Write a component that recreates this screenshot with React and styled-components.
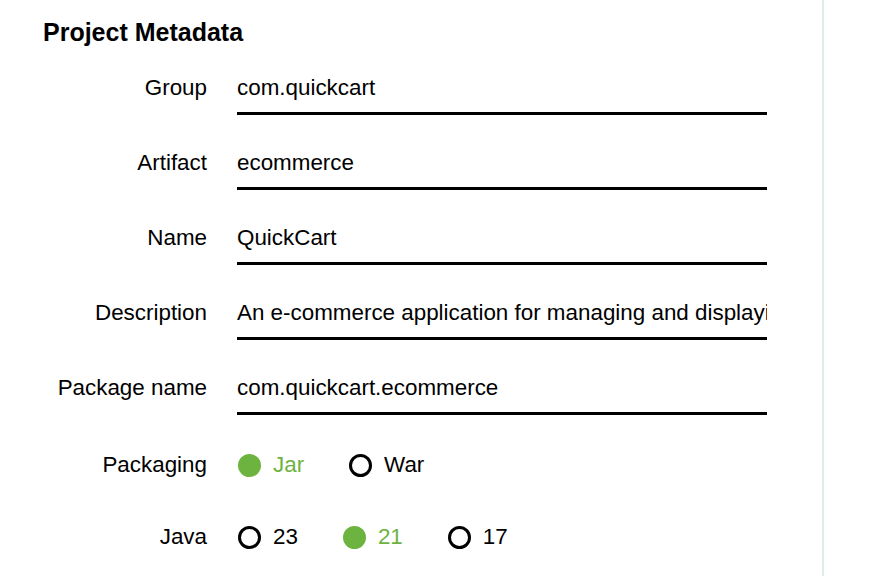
import React, { useState } from 'react'
import styled, { createGlobalStyle } from 'styled-components'

const GlobalStyle = createGlobalStyle`
  html, body {
    margin: 0;
    padding: 0;
    background: #ffffff;
    font-family: "Liberation Sans", Arial, sans-serif;
    color: #000000;
  }
`

const Page = styled.div`
  display: flex;
  width: 874px;
  height: 576px;
  overflow: hidden;
`

const Main = styled.section`
  width: 824px;
  height: 100%;
  border-right: 2px solid #e1eaec;
  box-sizing: border-box;
  padding-left: 43px;
`

const Heading = styled.h2`
  margin: 18px 0 0;
  font-size: 25px;
  line-height: 28px;
  font-weight: 700;
`

const Form = styled.div`
  display: flex;
  flex-direction: column;
  margin-top: 29px;
`

const Field = styled.div`
  display: flex;
  align-items: ${props => props.$center ? 'center' : 'flex-start'};
  gap: 30px;
  margin-top: ${props => props.$top || 0}px;
`

const Label = styled.label`
  width: 164px;
  text-align: right;
  font-size: 22.4px;
  line-height: 26px;
  white-space: nowrap;
`

const Input = styled.input`
  width: 530px;
  box-sizing: border-box;
  border: none;
  border-bottom: 3px solid #000;
  padding: 0 0 11px;
  margin: 0;
  font-family: inherit;
  font-size: 22.4px;
  line-height: 26px;
  height: 40px;
  color: #000;
  background: transparent;
  outline: none;
`

const Options = styled.div`
  display: flex;
  align-items: center;
  gap: 44px;
  height: 30px;
`

const Option = styled.label`
  display: flex;
  align-items: center;
  gap: 12px;
  cursor: pointer;
  font-size: 22.4px;
  line-height: 26px;
  color: ${props => props.$checked ? '#6db33f' : '#000'};
`

const Dot = styled.span`
  width: 23px;
  height: 23px;
  box-sizing: border-box;
  border-radius: 50%;
  margin-left: 1px;
  border: 3px solid ${props => props.$checked ? '#6db33f' : '#000'};
  background: ${props => props.$checked ? '#6db33f' : 'transparent'};
`

const Side = styled.aside`
  flex: 1;
  background: #fff;
`

const fields = [
  { label: 'Group', value: 'com.quickcart' },
  { label: 'Artifact', value: 'ecommerce' },
  { label: 'Name', value: 'QuickCart' },
  { label: 'Description', value: 'An e-commerce application for managing and displaying products' },
  { label: 'Package name', value: 'com.quickcart.ecommerce' },
]

const RadioGroup = ({ options, value, onChange }) => (
  <Options>
    {options.map(opt => (
      <Option key={opt} $checked={opt === value} onClick={() => onChange(opt)}>
        <Dot $checked={opt === value} />
        {opt}
      </Option>
    ))}
  </Options>
)

const App = () => {
  const [values, setValues] = useState(fields.map(f => f.value))
  const [packaging, setPackaging] = useState('Jar')
  const [java, setJava] = useState('21')

  return (
    <Page>
      <GlobalStyle />
      <Main>
        <Heading>Project Metadata</Heading>
        <Form>
          {fields.map((f, i) => (
            <Field key={f.label} $top={i === 0 ? 0 : 35}>
              <Label>{f.label}</Label>
              <Input
                value={values[i]}
                onChange={e => setValues(values.map((v, j) => j === i ? e.target.value : v))}
              />
            </Field>
          ))}
          <Field $center $top={35}>
            <Label>Packaging</Label>
            <RadioGroup options={['Jar', 'War']} value={packaging} onChange={setPackaging} />
          </Field>
          <Field $center $top={42}>
            <Label>Java</Label>
            <RadioGroup options={['23', '21', '17']} value={java} onChange={setJava} />
          </Field>
        </Form>
      </Main>
      <Side />
    </Page>
  )
}

export default App
